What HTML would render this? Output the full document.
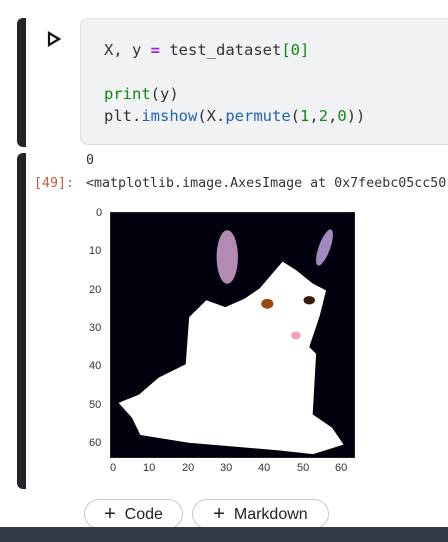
<!DOCTYPE html>
<html><head><style>
body{margin:0;width:448px;height:542px;background:#fff;position:relative;overflow:hidden;font-family:"Liberation Sans",sans-serif}
.bar{position:absolute;left:17px;width:9px;background:#23252a;border-radius:6px 0 0 6px}
.code{position:absolute;left:80px;top:18px;width:380px;height:127px;background:#f1f2f4;border:1px solid #dcdde0;border-radius:8px;box-sizing:border-box}
.mono{font-family:"DejaVu Sans Mono","Liberation Mono",monospace;font-size:15.5px;color:#333;position:absolute;white-space:pre}
.g{color:#118811}.b{color:#2262b5}.p{color:#a020f0;font-weight:bold}
.tk{position:absolute;font-size:11px;color:#333}
.btn{position:absolute;top:499px;height:30px;border:1px solid #c8c8c8;border-radius:15px;font-size:16px;color:#222;box-sizing:border-box;line-height:28px;text-align:center;background:#fff}
.btn b{font-weight:normal;font-size:20px;vertical-align:-1px}
</style></head><body>
<div class="bar" style="top:18px;height:129px"></div>
<svg style="position:absolute;left:47px;top:31px" width="14" height="16" viewBox="0 0 14 16"><path d="M2 2 L12 8 L2 14 Z" fill="none" stroke="#111" stroke-width="2.2" stroke-linejoin="miter"/></svg>
<div class="code"></div>
<div class="mono" style="left:104px;top:41px">X, y <span class="p">=</span> test_dataset<span class="g">[0]</span></div>
<div class="mono" style="left:104px;top:85px"><span class="g">print</span>(y)</div>
<div class="mono" style="left:104px;top:107px">plt.<span class="b">imshow</span>(X.<span class="b">permute</span>(<span class="g">1</span>,<span class="g">2</span>,<span class="g">0</span>))</div>
<div class="bar" style="top:153px;height:336px"></div>
<div class="mono" style="left:86px;top:153px;font-size:13.3px">0</div>
<div class="mono" style="left:34px;top:176px;font-size:13.3px;color:#c65d3b">[49]:</div>
<div class="mono" style="left:86px;top:176px;font-size:13.3px">&lt;matplotlib.image.AxesImage at 0x7feebc05cc50</div>
<svg style="position:absolute;left:111px;top:213px" width="244" height="245" viewBox="0 0 64 64" preserveAspectRatio="none">
<rect width="64" height="64" fill="#02020e"/>
<ellipse cx="30.5" cy="11.5" rx="2.8" ry="7" fill="#b48bb0"/>
<ellipse cx="56" cy="9" rx="1.5" ry="5" fill="#a08ac0" transform="rotate(20 56 9)"/>
<polygon fill="#fff" points="45,12.7 39,19.7 35,22.4 30,24.6 25,22.8 20.5,27.2 19.6,39.5 12.5,43 7.4,47.4 2,49.6 5.5,53.5 7.7,58 20.4,60 44,62 53,63 61,60.5 58,56.1 52.9,52.6 53.8,36.8 52,35 54.7,27 56.4,20.2 52.9,18.4 48.5,14.9"/>
<ellipse cx="41" cy="23.7" rx="1.6" ry="1.3" fill="#9a4a10"/>
<ellipse cx="52" cy="22.8" rx="1.5" ry="1.1" fill="#3a1a08"/>
<ellipse cx="48.5" cy="32" rx="1.3" ry="1" fill="#f0a0c0"/>
</svg>
<div style="position:absolute;left:110px;top:212px;width:245px;height:246px;border:1px solid #222;box-sizing:border-box"></div>
<div class="tk" style="left:96px;top:207px">0</div>
<div class="tk" style="left:89px;top:245px">10</div>
<div class="tk" style="left:89px;top:284px">20</div>
<div class="tk" style="left:89px;top:322px">30</div>
<div class="tk" style="left:89px;top:360px">40</div>
<div class="tk" style="left:89px;top:399px">50</div>
<div class="tk" style="left:89px;top:437px">60</div>
<div class="tk" style="left:110px;top:462px">0</div>
<div class="tk" style="left:143px;top:462px">10</div>
<div class="tk" style="left:182px;top:462px">20</div>
<div class="tk" style="left:220px;top:462px">30</div>
<div class="tk" style="left:258px;top:462px">40</div>
<div class="tk" style="left:297px;top:462px">50</div>
<div class="tk" style="left:335px;top:462px">60</div>
<div class="btn" style="left:84px;width:99px"><b>+</b>&nbsp; Code</div>
<div class="btn" style="left:192px;width:137px"><b>+</b>&nbsp; Markdown</div>
<div style="position:absolute;left:0;top:527px;width:448px;height:15px;background:#343a46"></div>
</body></html>
